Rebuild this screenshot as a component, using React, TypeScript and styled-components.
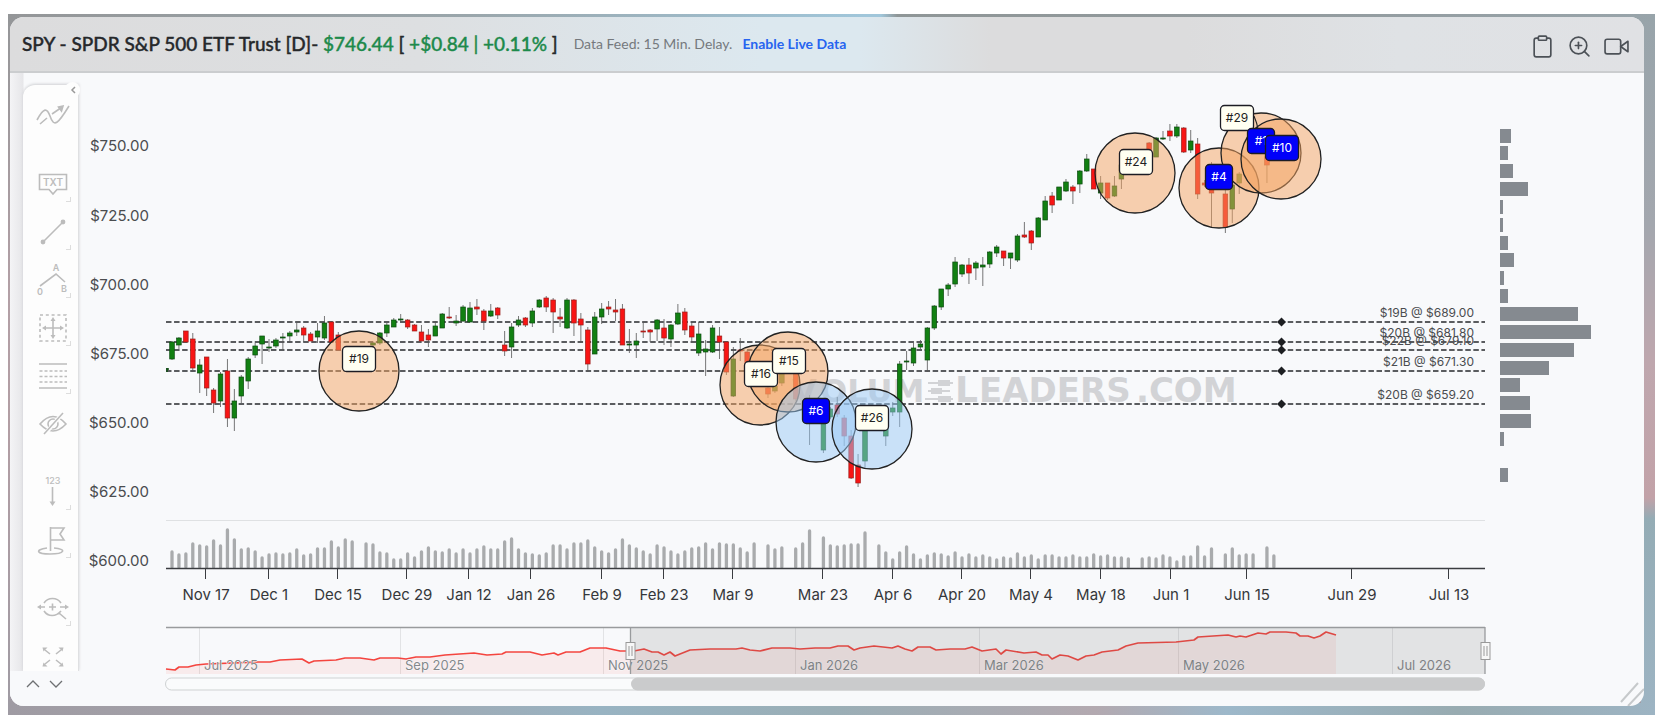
import React from "react";
import styled, { createGlobalStyle, css } from "styled-components";
import { FiClipboard, FiVideo, FiZoomIn } from "react-icons/fi";

const GlobalStyle = createGlobalStyle`
  *, *::before, *::after { box-sizing: border-box; }
  body { margin: 0; background: #fff; font-family: Inter, "Liberation Sans", sans-serif; }
`;

const Page = styled.main`
  padding: 14px 9px 13px 8px;
`;

const Backdrop = styled.div`
  padding: 3px 11px 9px 2px;
  background:
    linear-gradient(90deg, #949698 0%, #9aa6ab 28%, #a0c6da 52%, #a0c6da 53%, #8f9697 54%, #929a9d 75%, #98a4aa 100%) top / 100% 8px no-repeat,
    linear-gradient(90deg, #9f9ba3 0%, #a5a4ab 18%, #98b3c2 36%, #9aaeb6 50%, #b3a9b0 66%, #9db8ca 74%, #98abb1 88%, #9db4c3 100%) bottom / 100% 12px no-repeat,
    linear-gradient(180deg, #98a4aa 0%, #a3a7ae 30%, #bfa7ae 50%, #c2a2a8 69%, #94acb5 72%, #9db4c3 100%) right / 14px 100% no-repeat,
    linear-gradient(180deg, #949698 0%, #b3a0a6 40%, #b29ea4 60%, #9f9ba3 100%);
`;

const Panel = styled.section`
  display: flex;
  flex-direction: column;
  overflow: hidden;
  border-radius: 14px;
  background: #f8f9fb;
`;

const Header = styled.header`
  display: flex;
  align-items: center;
  height: 56px;
  padding: 0 15px 0 12px;
  border-bottom: 2px solid #cbcdcf;
  background: linear-gradient(90deg, #dcdcdd 0%, #dddfe1 25%, #dce8ef 46%, #dce8ef 52%, #dcdcdd 60%, #dcdcdd 72%, #dfe2e5 85%, #e0e1e4 100%);
  font-family: Lato, sans-serif;
`;

const Title = styled.h1`
  margin: 0;
  color: #26282b;
  font-size: 19px;
  font-weight: 500;
  line-height: 24px;
  white-space: pre;
  -webkit-text-stroke: 0.4px currentColor;
`;

const Gain = styled.span`
  color: #1d8a4b;
`;

const Feed = styled.p`
  margin: 0 auto 0 16px;
  color: #75797d;
  font-size: 14px;
  line-height: 20px;
  white-space: nowrap;
`;

const FeedLink = styled.a`
  margin-left: 10px;
  color: #2764f0;
  font-weight: 700;
  text-decoration: none;
`;

const HeaderActions = styled.div`
  display: flex;
  gap: 12px;
  padding-top: 4px;
`;

const plainButton = css`
  display: flex;
  align-items: center;
  justify-content: center;
  padding: 0;
  border: 0;
  background: none;
  cursor: pointer;
`;

const ActionButton = styled.button`
  ${plainButton}
  color: #4c5157;
  svg { width: 25px; height: 25px; stroke-width: 1.6; }
`;

const Body = styled.div`
  display: flex;
`;

const SideColumn = styled.aside`
  position: relative;
  display: flex;
  flex: 0 0 70px;
  flex-direction: column;
  min-width: 0;
  padding: 12px 1px 0 13px;
  background: linear-gradient(90deg, #f4f4f6 0, #e6e6e9 13px, #f8f9fb 14px);
`;

const Toolbar = styled.div`
  display: flex;
  flex: 1 1 0;
  flex-direction: column;
  min-height: 0;
  padding: 7px 0 0;
  overflow: hidden;
  border-right: 1px solid #dfe0e2;
  border-radius: 12px 0 0 0;
  background: #fdfdfd;
  box-shadow: 0 -1px 3px #cfd0d3;
`;

const ToolButton = styled.button<{ $group?: boolean; $menu?: boolean }>`
  ${plainButton}
  position: relative;
  flex: 0 0 48px;
  width: 60px;
  margin-top: ${(p) => (p.$group ? "20px" : "0")};
  color: #bcbcbc;
  ${(p) =>
    p.$menu &&
    css`
      &::after {
        content: "";
        position: absolute;
        right: 12px;
        bottom: 6px;
        width: 5px;
        height: 5px;
        border: solid #dddddd;
        border-width: 0 1px 1px 0;
      }
    `}
`;

const CollapseButton = styled.button`
  ${plainButton}
  position: absolute;
  top: 9px;
  right: 0;
  width: 15px;
  height: 16px;
  border-radius: 8px;
  background: #fdfdfd;
  color: #999;
`;

const Scrollers = styled.div`
  display: flex;
  gap: 5px;
  height: 35px;
  margin-left: -13px;
  padding: 0 0 10px 14px;
  background: #f8f9fb;
`;

const ScrollButton = styled.button`
  ${plainButton}
  width: 18px;
  color: #6e7072;
`;

const Chart = styled.svg`
  display: block;
  flex: 1 1 0;
  min-width: 0;
  height: auto;
  font-family: Inter, "Liberation Sans", sans-serif;
`;

type Tool = { name: string; group?: boolean; menu?: boolean; art: React.ReactNode };

const tools: Tool[] = [
  {
    name: "Indicators",
    art: (
      <>
        <path d="M4 24C11 11 14 12 17 20C21 32 25 28 36 10" />
        <path d="M7 28L14 22M19 18L27 12.500" />
        <path d="M30 10L25.500 11L28.500 15Z" fill="currentColor" />
      </>
    ),
  },
  {
    name: "Annotation",
    group: true,
    menu: true,
    art: (
      <>
        <path d="M6.500 10.500H33.500V25.500H24L20 30L16 25.500H6.500Z" />
        <text x="20" y="22" fontSize="10" fontWeight="600" textAnchor="middle" fill="currentColor" stroke="none">TXT</text>
      </>
    ),
  },
  {
    name: "Trend line",
    menu: true,
    art: (
      <>
        <path d="M10 30L30 10" />
        <circle cx="10" cy="30" r="1.6" fill="currentColor" />
        <circle cx="30" cy="10" r="1.6" fill="currentColor" />
      </>
    ),
  },
  {
    name: "Elliott wave",
    menu: true,
    art: (
      <>
        <path d="M7 26L23 14L32 22" />
        <g fontSize="9" fontWeight="600" fill="currentColor" stroke="none" textAnchor="middle">
          <text x="23" y="11">A</text>
          <text x="7" y="35">0</text>
          <text x="31" y="32">B</text>
        </g>
      </>
    ),
  },
  {
    name: "Measure",
    menu: true,
    art: (
      <>
        <rect x="7" y="7" width="26" height="26" strokeDasharray="3 2.8" />
        <path d="M20 11V29M11 20H29" />
        <path d="M20 9L17.500 13H22.500ZM20 31L17.500 27H22.500ZM9 20L13 17.500V22.500ZM31 20L27 17.500V22.500Z" fill="currentColor" stroke="none" />
      </>
    ),
  },
  {
    name: "Fibonacci levels",
    menu: true,
    art: (
      <>
        <path d="M6 8H34M6 32H34" />
        <path d="M6.500 15H34M6.500 20.500H34M6.500 26H34" strokeDasharray="3 2" />
      </>
    ),
  },
  {
    name: "Hide drawings",
    art: (
      <>
        <path d="M7 20Q20 5 33 20Q20 34 7 20Z" />
        <circle cx="20" cy="20" r="5" />
        <path d="M12 30L29 10" stroke="#fdfdfd" strokeWidth="4" />
        <path d="M11 30L30 9" />
      </>
    ),
  },
  {
    name: "Numbered marks",
    group: true,
    menu: true,
    art: (
      <>
        <text x="20" y="12" fontSize="9" fontWeight="500" textAnchor="middle" fill="currentColor" stroke="none">123</text>
        <path d="M19.500 15V31" />
        <path d="M19.500 34L16.500 29.500H22.500Z" fill="currentColor" stroke="none" />
      </>
    ),
  },
  {
    name: "Flag",
    menu: true,
    art: (
      <>
        <path d="M17.500 31V7M18 8H31L27 14L31 20H18" />
        <path d="M14 28C1 30 4 34 17 34C32 34 34 29 21 28" />
      </>
    ),
  },
  {
    name: "Zoom",
    group: true,
    menu: true,
    art: (
      <>
        <path d="M11 15C15 9 24 9 28 15M11 23C15 29 23 29 28 23M26 25L33 31M16 19H23M19.500 15.500V22.500M7 19H12M27 19H33" />
        <path d="M4 19L8 16.500V21.500ZM36 19L32 16.500V21.500Z" fill="currentColor" stroke="none" />
      </>
    ),
  },
  {
    name: "Full screen",
    art: (
      <>
        <path d="M12 14L17 18M28 14L23 18M12 28L17 24M28 28L23 24" />
        <path d="M9.500 11.500H14.500L10.500 15.500ZM30.500 11.500H25.500L29.500 15.500ZM9.500 30.500H14.500L10.500 26.500ZM30.500 30.500H25.500L29.500 26.500Z" fill="currentColor" stroke="none" />
      </>
    ),
  },
];

/* Geometry shared by the price and volume series. */
const FIRST_BAR = 172;
const BAR_STEP = 6.93;
const PLOT_LEFT = 166;
const PLOT_RIGHT = 1485;
const VOLUME_BASE = 568;
const barX = (i: number) => FIRST_BAR + BAR_STEP * i;

/* Trading day, high, body top, body bottom, low, 1 for a rising day. */
const candles: number[][] = [
  [0,341,342,359,360,1],[1,337,338,345,349,1],[2,331,331,342,343,0],[3,333,339,368,372,0],[4,359,365,373,393,1],[5,357,357,388,396,0],
  [6,388,390,403,413,0],[7,372,374,401,407,1],[8,359,371,418,427,0],[9,389,401,418,431,1],[10,375,377,396,403,1],[11,357,359,381,389,1],
  [12,343,346,355,358,1],[13,336,336,344,364,1],[14,339,347,348,352,1],[15,338,340,346,348,1],[16,333,337,338,350,1],[17,331,333,336,343,1],
  [18,323,330,332,336,1],[19,326,328,335,342,0],[20,332,334,341,341,0],[21,323,331,337,343,1],[22,316,323,338,340,1],[23,321,322,342,342,0],
  [24,332,335,350,350,0],[29,342,343,345,347,1],[30,332,333,343,345,1],[31,323,325,333,337,1],[32,318,320,327,327,1],[33,314,319,320,322,1],
  [34,319,320,327,329,0],[35,324,325,331,331,0],[36,325,332,341,341,0],[37,329,335,340,347,0],[38,321,326,336,336,1],[39,313,314,328,328,1],
  [40,307,317,318,319,0],[41,315,321,323,326,1],[42,305,307,321,322,1],[43,302,308,322,322,1],[44,299,307,309,315,0],[45,309,311,321,330,0],
  [46,304,311,316,317,1],[47,307,308,315,319,0],[48,331,345,351,356,0],[49,323,327,347,358,1],[50,316,320,325,327,1],[51,317,318,325,327,0],
  [52,308,311,323,327,1],[53,299,300,307,308,1],[54,296,298,307,312,0],[55,298,300,312,333,0],[56,308,317,319,327,0],[57,298,300,328,329,1],
  [58,299,300,323,336,0],[59,313,319,325,342,0],[60,327,330,364,372,0],[61,312,317,354,354,1],[62,303,309,317,324,1],[63,301,307,309,315,0],
  [64,299,310,312,321,0],[65,304,309,345,345,0],[66,329,344,345,353,1],[67,333,341,345,358,1],[68,322,331,332,338,0],[69,329,330,332,342,0],
  [70,319,320,329,341,1],[71,319,328,338,345,0],[72,324,325,339,347,1],[73,304,313,324,325,1],[74,308,312,330,335,0],[75,322,326,337,342,0],
  [76,322,334,353,356,1],[77,340,349,352,376,1],[78,325,328,352,353,1],[79,327,336,342,359,0],[80,342,342,372,375,0],[81,347,359,396,397,1],
  [82,338,350,351,361,0],[83,350,352,371,371,0],[86,385,388,394,398,0],[87,384,386,391,393,1],[88,372,373,383,386,1],[90,372,374,399,401,0],
  [92,395,404,418,445,0],[94,400,410,450,453,1],[95,407,409,417,419,1],[96,397,405,414,417,0],[97,415,418,436,446,0],[98,430,436,478,479,0],
  [99,454,465,483,487,0],[100,420,428,461,468,1],[103,420,428,436,446,1],[104,402,408,412,416,1],[105,361,364,412,427,1],[106,351,361,362,370,1],
  [107,343,348,363,366,1],[108,340,344,347,349,1],[109,327,328,360,372,1],[110,305,306,328,330,1],[111,289,289,307,310,1],[112,283,285,289,296,1],
  [113,257,262,284,287,1],[114,264,265,274,277,1],[115,258,265,273,284,0],[116,261,263,268,280,1],[117,257,265,267,286,1],[118,251,252,264,268,1],
  [119,245,247,253,257,1],[120,251,251,258,266,0],[121,253,253,258,269,1],[122,234,236,260,262,1],[123,222,235,237,238,0],[124,230,231,243,250,0],
  [125,217,218,237,237,1],[126,196,201,220,220,1],[127,192,196,205,213,0],[128,187,187,200,200,1],[129,179,182,191,192,1],[130,185,187,191,204,0],
  [131,170,171,184,193,1],[132,154,159,171,172,1],[133,169,169,189,189,0],[134,176,183,193,199,1],[135,183,183,198,200,0],[136,176,186,196,197,1],
  [137,160,165,179,189,1],[141,142,143,150,152,0],[142,137,138,157,157,1],[143,131,138,139,140,1],[144,124,131,136,141,0],[145,124,127,136,138,1],
  [146,127,128,152,153,0],[147,130,141,150,153,1],[148,138,144,194,199,0],[149,180,183,185,187,0],[150,162,185,193,227,0],[152,190,194,227,233,0],
  [153,180,185,209,223,1],[154,172,174,183,194,1],[158,155,157,165,183,0],
];

const volumes: number[] = [
  17,14,15,25,23,22,28,23,39,29,19,20,17,11,14,15,14,15,19,13,14,20,20,27,21,29,27,0,25,24,16,15,9,9,15,11,17,21,17,16,19,15,19,15,19,22,19,19,27,30,
  19,15,14,13,15,23,23,19,25,25,28,21,17,15,19,29,23,20,17,14,23,21,17,14,17,20,21,25,19,25,24,24,20,16,25,0,23,19,21,0,20,25,38,0,31,23,22,23,24,24,
  36,0,23,16,9,16,22,14,9,13,15,14,12,16,11,14,11,13,11,9,11,10,15,11,13,9,13,13,11,11,13,11,11,14,12,13,11,11,10,0,10,11,10,13,11,7,12,12,22,12,
  20,0,14,20,13,14,14,0,21,13,
];

const prices = [
  { label: "$750.00", y: 151 }, { label: "$725.00", y: 221 }, { label: "$700.00", y: 290 }, { label: "$675.00", y: 359 },
  { label: "$650.00", y: 428 }, { label: "$625.00", y: 497 }, { label: "$600.00", y: 566 },
];

const dates: [string, number][] = [
  ["Nov 17", 206], ["Dec 1", 269], ["Dec 15", 338], ["Dec 29", 407], ["Jan 12", 469], ["Jan 26", 531], ["Feb 9", 602], ["Feb 23", 664], ["Mar 9", 733],
  ["Mar 23", 823], ["Apr 6", 893], ["Apr 20", 962], ["May 4", 1031], ["May 18", 1101], ["Jun 1", 1171], ["Jun 15", 1247], ["Jun 29", 1352], ["Jul 13", 1449],
];

const levels = [
  { label: "$19B @ $689.00", y: 322 }, { label: "$20B @ $681.80", y: 342 }, { label: "$22B @ $679.10", y: 350 },
  { label: "$21B @ $671.30", y: 371 }, { label: "$20B @ $659.20", y: 404 },
];

const profile = [11, 8, 13, 28, 3, 3, 8, 14, 4, 8, 78, 91, 74, 49, 20, 30, 31, 4, 0, 8];

const circles: { x: number; y: number; cool?: boolean }[] = [
  { x: 359, y: 371 }, { x: 760, y: 385 }, { x: 788, y: 372 }, { x: 816, y: 422, cool: true }, { x: 872, y: 429, cool: true },
  { x: 1135, y: 173 }, { x: 1219, y: 188 }, { x: 1261, y: 153 }, { x: 1281, y: 159 },
];

const tags: { text: string; x: number; y: number; top?: boolean }[] = [
  { text: "#19", x: 359, y: 359 }, { text: "#16", x: 761, y: 374 }, { text: "#15", x: 789, y: 361 }, { text: "#6", x: 816, y: 411, top: true },
  { text: "#26", x: 872, y: 418 }, { text: "#24", x: 1136, y: 162 }, { text: "#4", x: 1219, y: 177, top: true }, { text: "#29", x: 1237, y: 118 },
  { text: "#1", x: 1261, y: 141, top: true }, { text: "#10", x: 1282, y: 148, top: true },
];

const months: [string, number][] = [
  ["Jul 2025", 200], ["Sep 2025", 401], ["Nov 2025", 604], ["Jan 2026", 796], ["Mar 2026", 980], ["May 2026", 1179], ["Jul 2026", 1393],
];

const overview =
  "166,669 175,670 179,667 188,667 196,665 206,664 258,662 270,662 280,660 302,659 309,663 314,661 336,660 345,658 360,658 374,660 380,658 398,658 406,659 416,657 430,657 445,655 474,653 487,655 502,654 506,652 530,652 542,655 554,653 558,655 566,652 580,652 590,648 606,648 620,651 634,651 644,649 652,652 658,652 664,655 670,652 675,656 690,650 710,649 736,649 742,648 750,650 760,651 772,648 790,648 800,649 815,648 830,648 838,646 848,646 854,650 860,648 874,646 892,648 898,646 905,649 912,651 918,647 930,647 936,650 950,649 965,649 972,647 982,651 996,649 1001,654 1006,650 1024,653 1036,652 1042,655 1048,655 1052,659 1060,655 1068,656 1078,660 1086,656 1094,655 1102,652 1118,650 1126,646 1138,643 1176,642 1194,640 1198,637 1228,635 1236,637 1240,636 1246,637 1258,633 1266,634 1270,632 1286,632 1296,633 1300,636 1308,636 1314,638 1320,636 1326,632 1336,635";

function Candle({ data }: { data: number[] }) {
  const [day, high, top, bottom, low, up] = data;
  const x = barX(day);
  return (
    <g>
      <line x1={x} x2={x} y1={high} y2={low} stroke="#555" strokeWidth="0.8" />
      <rect x={x - 2.3} y={top} width="4.6" height={Math.max(1, bottom - top)} fill={up ? "#128012" : "#f81414"} stroke={up ? "#0c4a10" : "#99201c"} strokeWidth="0.7" />
    </g>
  );
}

function Tag({ text, x, y, top }: { text: string; x: number; y: number; top?: boolean }) {
  const width = text.length > 2 ? 33 : 27;
  return (
    <g>
      <rect x={x - width / 2} y={y - 12.5} width={width} height="25" rx="4" fill={top ? "#0000fa" : "#fffff2"} stroke="#1c1c24" strokeWidth="1.3" />
      <text x={x} y={y + 4} textAnchor="middle" fontSize="12" fill={top ? "#fff" : "#222"}>{text}</text>
    </g>
  );
}

function Handle({ x }: { x: number }) {
  return (
    <g stroke="#999" fill="#f7f7f7">
      <rect x={x - 4.5} y="642.5" width="9" height="17" />
      <path d={`M${x - 1.5} 646V656M${x + 1.5} 646V656`} />
    </g>
  );
}

function PriceChart() {
  return (
    <Chart viewBox="80 73 1564 633" role="img" aria-label="SPY daily price chart">
      <g fill="#d2d3d6" fontFamily="'DejaVu Sans', sans-serif" fontWeight="700">
        <text x="792" y="402" fontSize="32">V</text>
        <text x="820" y="402" fontSize="32">OLUM</text>
        <path d="M928 383H953M928 391H950M925 399H953" stroke="#d2d3d6" strokeWidth="2" />
        <path d="M938 380H950V386H938ZM931 388H942V394H931ZM938 396H951V402H938Z" />
        <text x="955" y="402" fontSize="36">L</text>
        <text x="979" y="402" fontSize="34">EADERS</text>
        <text x="1136" y="402" fontSize="34">.COM</text>
      </g>

      <g fontSize="15" fill="#4a4c4f" textAnchor="end">
        {prices.map((p) => <text key={p.label} x="149" y={p.y}>{p.label}</text>)}
      </g>

      <g stroke="#26282c" strokeWidth="1.3" strokeDasharray="5.500 2.570">
        {levels.map((l) => <line key={l.label} x1={PLOT_LEFT} x2={PLOT_RIGHT} y1={l.y} y2={l.y} />)}
      </g>
      <g fontSize="12" fill="#4a4c4f" textAnchor="end">
        {levels.map((l) => <text key={l.label} x="1474" y={l.y - 5}>{l.label}</text>)}
      </g>
      <g fill="#1d1f22">
        {levels.map((l) => <path key={l.label} d={`M1281.500 ${l.y - 4.5}L1286 ${l.y}L1281.500 ${l.y + 4.5}L1277 ${l.y}Z`} />)}
      </g>

      <path d="M167 368V372M166 369H169" stroke="#0c4a10" strokeWidth="1.500" />
      {candles.map((c) => <Candle key={c[0]} data={c} />)}

      {circles.map((c) => (
        <circle key={c.x} cx={c.x} cy={c.y} r="40" fill={c.cool ? "#9ac9f6" : "#f4a362"} fillOpacity="0.5" stroke="#222" strokeWidth="1.3" />
      ))}
      {tags.map((t) => <Tag key={t.text} {...t} />)}
      <path d="M1254 116Q1257 123 1258 129" fill="none" stroke="#222" strokeWidth="1.1" />

      <g fill="#858a90">
        {profile.map((w, i) => <rect key={i} x="1500" y={Math.round(128.5 + 17.85 * i)} width={w} height="14" />)}
      </g>

      <line x1={PLOT_LEFT} x2={PLOT_RIGHT} y1="520.500" y2="520.500" stroke="#dfe1e3" />
      <g stroke="#a9abad" strokeWidth="3.300" strokeLinecap="round">
        {volumes.map((v, i) => v > 0 && <line key={i} x1={barX(i)} x2={barX(i)} y1={VOLUME_BASE - 1} y2={VOLUME_BASE - v + 1} />)}
      </g>
      <g stroke="#3a3c40">
        <line x1={PLOT_LEFT} x2={PLOT_RIGHT} y1="568.500" y2="568.500" strokeWidth="1.300" />
        {dates.map(([label, x]) => <line key={label} x1={x - 0.5} x2={x - 0.5} y1="569" y2="579" />)}
      </g>
      <g fontSize="15" fill="#35373a" textAnchor="middle">
        {dates.map(([label, x]) => <text key={label} x={x} y="600">{label}</text>)}
      </g>

      <g stroke="#e2e3e5">
        {months.map(([label, x]) => <line key={label} x1={x - 0.5} x2={x - 0.5} y1="628" y2="674" />)}
      </g>
      <polygon points={`166,674 ${overview} 1336,674`} fill="#ff3b30" fillOpacity="0.07" />
      <polyline points={overview} fill="none" stroke="#f4453f" strokeWidth="1.700" strokeLinejoin="round" />
      <g fontSize="13" fill="#85878a" stroke="#f8f9fb" strokeWidth="1" paintOrder="stroke">
        {months.map(([label, x]) => <text key={label} x={x + 4} y="670">{label}</text>)}
      </g>
      <rect x="630" y="627" width="855" height="47" fill="#646864" fillOpacity="0.15" />
      <path d="M166 627.500H1485M630.500 627V674M1485 627V674" fill="none" stroke="#999b9d" strokeWidth="1.300" />
      <Handle x={630.5} />
      <Handle x={1485.5} />
      <rect x="165.500" y="678" width="1319" height="12" rx="6" fill="#fafbfc" stroke="#cfd2d3" />
      <rect x="631" y="677.500" width="854" height="13" rx="6.500" fill="#cacbcc" />

      <path d="M1621 702L1638 683M1628 706L1644 689" stroke="#c6c9cb" strokeWidth="2" />
    </Chart>
  );
}

export default function App() {
  return (
    <>
      <GlobalStyle />
      <Page>
        <Backdrop>
          <Panel>
            <Header>
              <Title>
                SPY - SPDR S&amp;P 500 ETF Trust [D]- <Gain>$746.44</Gain> [ <Gain>+$0.84 | +0.11%</Gain> ]
              </Title>
              <Feed>
                Data Feed: 15 Min. Delay.
                <FeedLink href="#live">Enable Live Data</FeedLink>
              </Feed>
              <HeaderActions>
                <ActionButton aria-label="Copy chart"><FiClipboard /></ActionButton>
                <ActionButton aria-label="Zoom in"><FiZoomIn /></ActionButton>
                <ActionButton aria-label="Record video"><FiVideo /></ActionButton>
              </HeaderActions>
            </Header>
            <Body>
              <SideColumn>
                <Toolbar role="toolbar" aria-label="Drawing tools">
                  {tools.map((t) => (
                    <ToolButton key={t.name} aria-label={t.name} $group={t.group} $menu={t.menu}>
                      <svg width="40" height="40" viewBox="0 0 40 40" fill="none" stroke="currentColor" strokeWidth="1.600" fontFamily="Inter, sans-serif">
                        {t.art}
                      </svg>
                    </ToolButton>
                  ))}
                </Toolbar>
                <CollapseButton aria-label="Collapse toolbar">
                  <svg width="6" height="8" viewBox="0 0 6 8" fill="none" stroke="currentColor" strokeWidth="1.500"><path d="M5 1L2 4L5 7" /></svg>
                </CollapseButton>
                <Scrollers>
                  <ScrollButton aria-label="Scroll tools up">
                    <svg width="14" height="8" viewBox="0 0 14 8" fill="none" stroke="currentColor" strokeWidth="1.300"><path d="M1 7L7 1L13 7" /></svg>
                  </ScrollButton>
                  <ScrollButton aria-label="Scroll tools down">
                    <svg width="14" height="8" viewBox="0 0 14 8" fill="none" stroke="currentColor" strokeWidth="1.300"><path d="M1 1L7 7L13 1" /></svg>
                  </ScrollButton>
                </Scrollers>
              </SideColumn>
              <PriceChart />
            </Body>
          </Panel>
        </Backdrop>
      </Page>
    </>
  );
}
